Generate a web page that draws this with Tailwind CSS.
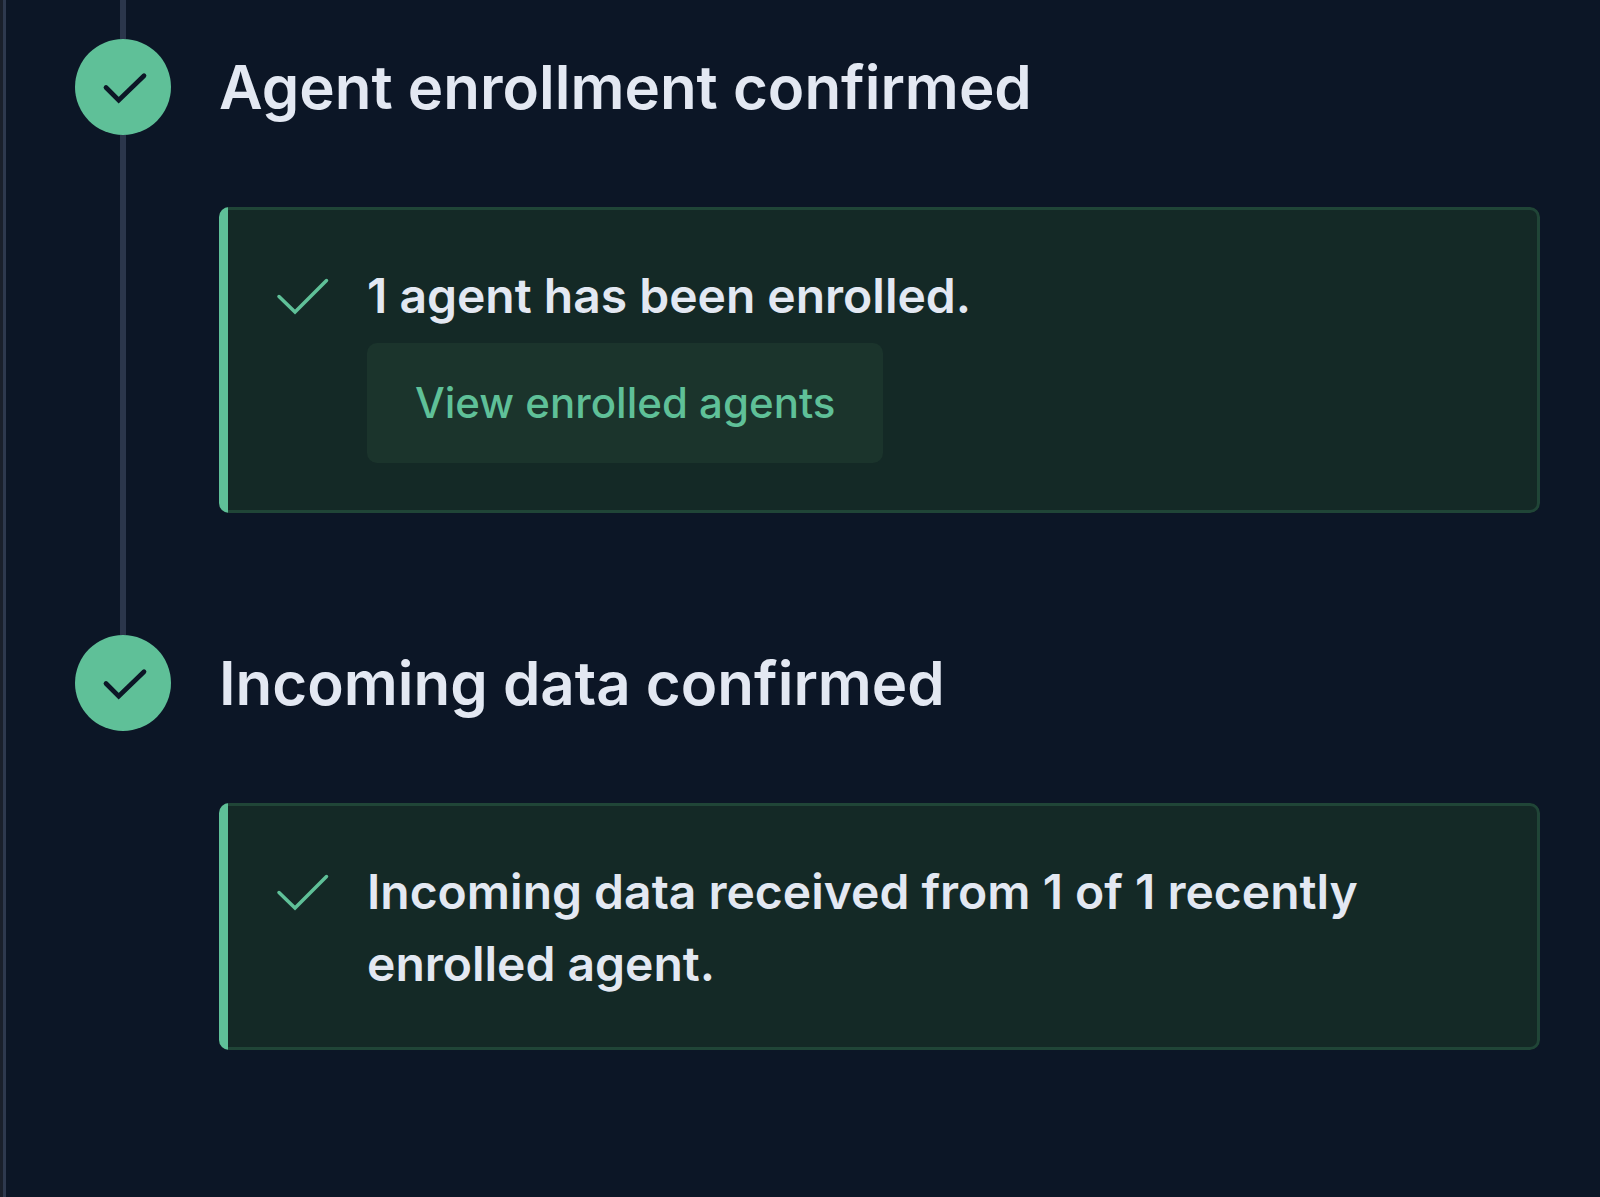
<!DOCTYPE html>
<html lang="en">
<head>
<meta charset="utf-8">
<title>Agent enrollment</title>
<script src="https://cdn.jsdelivr.net/npm/@tailwindcss/browser@4"></script>
</head>
<body class="bg-[#1a202b]">
<main class="ml-[3px] min-h-screen border-l-[3px] border-[#2e394e] bg-[#0c1626] pr-[60px] pl-[69px] font-['Inter',sans-serif] text-[#e3e8f2]">
  <ol>
    <li class="flex gap-12">
      <div class="flex w-24 shrink-0 flex-col items-center">
        <span class="h-[39px] w-[6px] bg-[#2b364b]"></span>
        <span class="size-24 rounded-full bg-[#5fc098]">
          <svg class="size-24" viewBox="0 0 96 96" fill="none" stroke="#0c1626" stroke-width="4.700" stroke-linecap="round" aria-label="Complete" role="img"><path d="M31 48.500 43.700 61.200 69 36.700"/></svg>
        </span>
        <span class="w-[6px] grow bg-[#2b364b]"></span>
      </div>
      <section class="min-w-0 grow pt-[39px] pb-[122px]">
        <h2 class="text-[60px] leading-[96px] font-semibold">Agent enrollment confirmed</h2>
        <div class="mt-[72px] flex overflow-hidden rounded-[10px] bg-[#142926]">
          <div class="w-[9px] shrink-0 bg-[#5fc098]"></div>
          <div class="flex grow gap-9 rounded-r-[10px] border-[3px] border-l-0 border-[#204537] px-12 pt-[50px] pb-[47px]">
            <svg class="h-[72px] w-[55px] shrink-0" viewBox="0 0 55 72" fill="none" stroke="#5fc098" stroke-width="3.500" stroke-linecap="round" aria-hidden="true"><path d="M3 36.500 19 52 50.500 20.500"/></svg>
            <div class="min-w-0">
              <p class="text-[48px] leading-[72px] font-semibold">1 agent has been enrolled.</p>
              <button type="button" class="mt-[11px] block h-[120px] rounded-[10px] bg-[#1b342c] px-12 text-[42px] leading-[72px] font-medium text-[#5fc098]">View enrolled agents</button>
            </div>
          </div>
        </div>
      </section>
    </li>
    <li class="flex gap-12">
      <div class="w-24 shrink-0">
        <span class="block size-24 rounded-full bg-[#5fc098]">
          <svg class="size-24" viewBox="0 0 96 96" fill="none" stroke="#0c1626" stroke-width="4.700" stroke-linecap="round" aria-label="Complete" role="img"><path d="M31 48.500 43.700 61.200 69 36.700"/></svg>
        </span>
      </div>
      <section class="min-w-0 grow">
        <h2 class="text-[60px] leading-[96px] font-semibold">Incoming data confirmed</h2>
        <div class="mt-[72px] flex overflow-hidden rounded-[10px] bg-[#142926]">
          <div class="w-[9px] shrink-0 bg-[#5fc098]"></div>
          <div class="flex grow gap-9 rounded-r-[10px] border-[3px] border-l-0 border-[#204537] px-12 pt-[50px] pb-[47px]">
            <svg class="h-[72px] w-[55px] shrink-0" viewBox="0 0 55 72" fill="none" stroke="#5fc098" stroke-width="3.500" stroke-linecap="round" aria-hidden="true"><path d="M3 36.500 19 52 50.500 20.500"/></svg>
            <p class="min-w-0 text-[48px] leading-[72px] font-semibold">Incoming data received from 1 of 1 recently enrolled agent.</p>
          </div>
        </div>
      </section>
    </li>
  </ol>
</main>
</body>
</html>
